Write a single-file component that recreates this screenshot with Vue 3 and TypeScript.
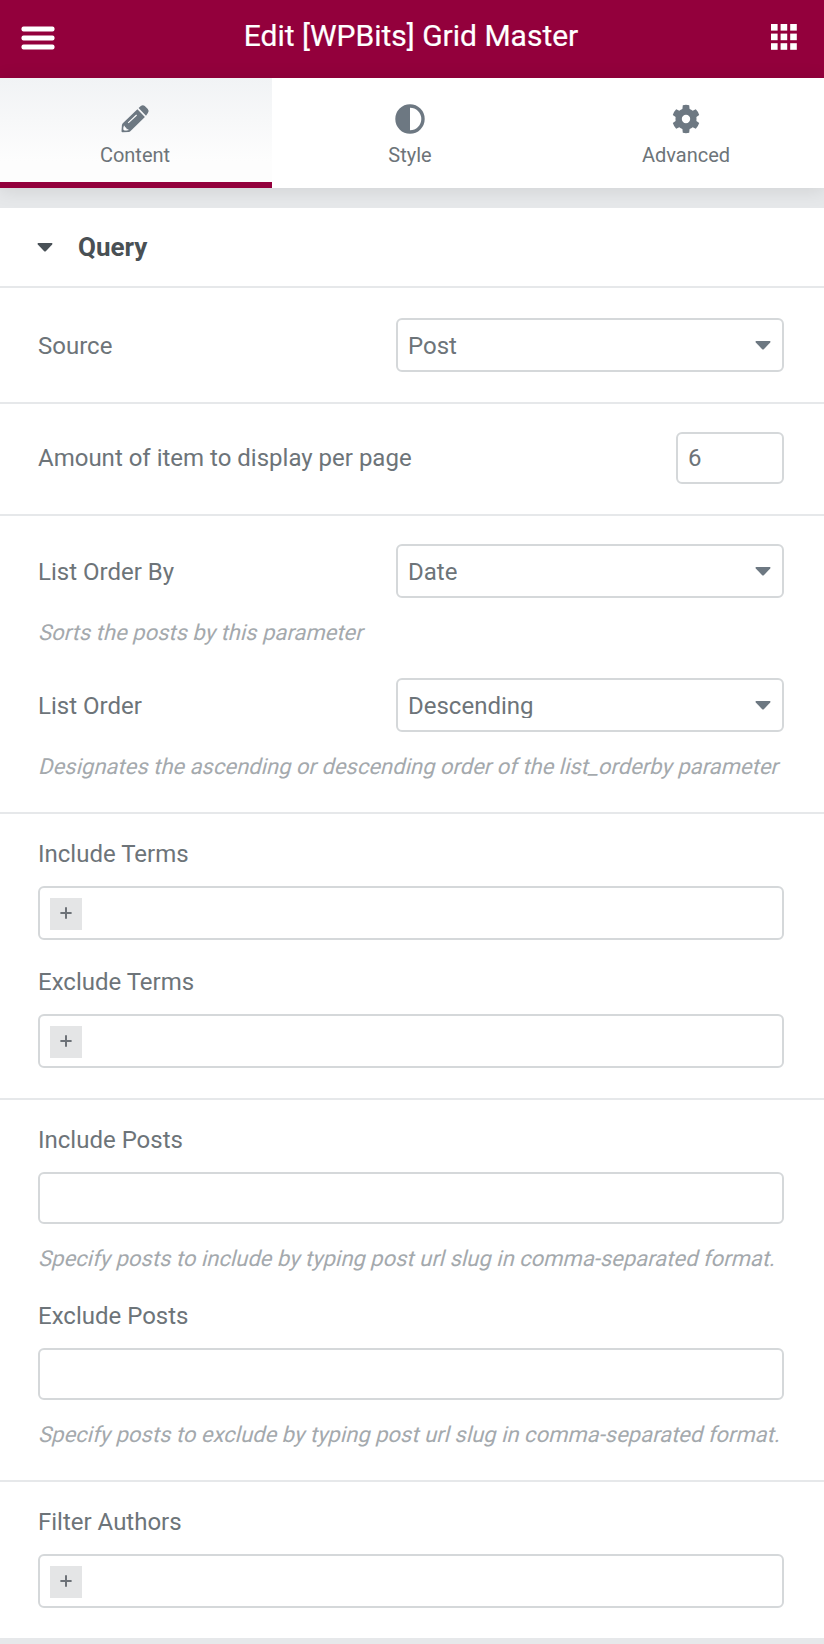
<script setup lang="ts">
interface Tab {
  id: string
  label: string
}

interface Control {
  kind: 'select' | 'number' | 'tags' | 'text'
  label: string
  value?: string
  help?: string
}

const tabs: Tab[] = [
  { id: 'content', label: 'Content' },
  { id: 'style', label: 'Style' },
  { id: 'advanced', label: 'Advanced' },
]
const activeTab = 'content'

const groups: Control[][] = [
  [{ kind: 'select', label: 'Source', value: 'Post' }],
  [{ kind: 'number', label: 'Amount of item to display per page', value: '6' }],
  [
    { kind: 'select', label: 'List Order By', value: 'Date', help: 'Sorts the posts by this parameter' },
    {
      kind: 'select',
      label: 'List Order',
      value: 'Descending',
      help: 'Designates the ascending or descending order of the list_orderby parameter',
    },
  ],
  [
    { kind: 'tags', label: 'Include Terms' },
    { kind: 'tags', label: 'Exclude Terms' },
  ],
  [
    {
      kind: 'text',
      label: 'Include Posts',
      help: 'Specify posts to include by typing post url slug in comma-separated format.',
    },
    {
      kind: 'text',
      label: 'Exclude Posts',
      help: 'Specify posts to exclude by typing post url slug in comma-separated format.',
    },
  ],
  [{ kind: 'tags', label: 'Filter Authors' }],
]
</script>

<template>
  <div class="panel">
    <header class="header">
      <svg class="menu" width="34" height="24" viewBox="0 0 34 24" fill="#fff">
        <rect x="0.5" y="0.4" width="33" height="5" rx="2" />
        <rect x="0.5" y="9.4" width="33" height="5" rx="2" />
        <rect x="0.5" y="18.4" width="33" height="5" rx="2" />
      </svg>
      <h1 class="title">Edit [WPBits] Grid Master</h1>
      <svg class="apps" width="26" height="26" viewBox="0 0 26 26" fill="#fff">
        <template v-for="r in 3" :key="r">
          <rect v-for="c in 3" :key="c" :x="(c - 1) * 9.6" :y="(r - 1) * 9.6" width="6.6" height="6.6" />
        </template>
      </svg>
    </header>

    <nav class="tabs">
      <div v-for="tab in tabs" :key="tab.id" class="tab" :class="{ active: tab.id === activeTab }">
        <svg v-if="tab.id === 'content'" class="icon" width="30" height="30" viewBox="0 0 30 30">
          <path d="M17.400 5.200 2.800 19.300Q2 20.100 1.900 21.200L1.500 27.200Q1.500 28.300 2.600 28.300L8.600 28Q9.800 27.900 10.600 27.100L24.900 12.900Z" fill="#6d7882" />
          <path d="M18.600 4.100 20.800 2Q22.800 .4 24.800 2L27.800 5.100Q29.500 7 27.900 9L26 11.700Z" fill="#6d7882" />
          <path d="M8.200 18.800 16.600 11" stroke="#fff" stroke-width="1.100" />
          <path d="M4.200 21.800Q3.200 23.700 3.800 26Q6 26.800 8.400 25.800Q6 25.700 5.900 23.800Q4.500 23.700 4.200 21.800Z" fill="#fff" stroke="#fff" stroke-width=".5" />
        </svg>
        <svg v-else-if="tab.id === 'style'" class="icon" width="30" height="30" viewBox="0 0 30 30">
          <circle cx="15" cy="15" r="13" fill="none" stroke="#6d7882" stroke-width="3.4" />
          <path d="M15 2A13 13 0 0 0 15 28Z" fill="#6d7882" />
        </svg>
        <svg v-else class="icon" width="30" height="30" viewBox="0 0 30 30" fill="#6d7882">
          <path
            fill-rule="evenodd"
            d="M11.8 1.3Q15 .4 18.2 1.3L18.6 5Q20.3 5.700 21.700 6.800L24.800 5.300Q27.300 7.800 28.200 10.900L25.400 13Q25.600 15 25.400 17L28.200 19.100Q27.300 22.200 24.800 24.700L21.700 23.200Q20.300 24.300 18.600 25L18.200 28.700Q15 29.600 11.800 28.700L11.400 25Q9.700 24.300 8.300 23.200L5.200 24.700Q2.700 22.200 1.800 19.100L4.600 17Q4.400 15 4.600 13L1.800 10.900Q2.700 7.800 5.200 5.300L8.300 6.800Q9.700 5.700 11.400 5ZM15 10.800A4.200 4.200 0 1 0 15 19.200 4.200 4.200 0 0 0 15 10.800Z"
          />
        </svg>
        <span class="tab-label">{{ tab.label }}</span>
      </div>
    </nav>

    <main class="body">
      <div class="section-head">
        <svg class="caret" width="16" height="9" viewBox="0 0 16 9" fill="#495157">
          <path d="M1.200 0H14.800Q16 .5 15.200 1.400L8.800 8.200Q8 9 7.200 8.200L.8 1.400Q0 .5 1.200 0Z" />
        </svg>
        <h2 class="section-title">Query</h2>
      </div>

      <section v-for="(group, gi) in groups" :key="gi" class="group" :class="[group[0].kind, { described: group[0].help }]">
        <div v-for="control in group" :key="control.label" class="control" :class="`is-${control.kind}`">
          <div class="field">
            <span class="label">{{ control.label }}</span>
            <div class="input">
              <span v-if="control.value" class="value">{{ control.value }}</span>
              <svg v-if="control.kind === 'select'" class="caret" width="16" height="9" viewBox="0 0 16 9" fill="#6d7882">
                <path d="M1.200 0H14.800Q16 .5 15.200 1.400L8.800 8.200Q8 9 7.200 8.200L.8 1.400Q0 .5 1.200 0Z" />
              </svg>
              <span v-if="control.kind === 'tags'" class="add">
                <svg width="12" height="12" viewBox="0 0 12 12" stroke="#6d7278" stroke-width="2">
                  <path d="M6 .2V11.800M.4 6H11.600" />
                </svg>
              </span>
            </div>
          </div>
          <p v-if="control.help" class="help">{{ control.help }}</p>
        </div>
      </section>
    </main>
  </div>
</template>

<style>
body {
  margin: 0;
  background: #e6e8ea;
}
</style>

<style scoped>
.panel {
  width: 824px;
  height: 1644px;
  overflow: hidden;
  background: #e6e8ea;
  font-family: Roboto, 'Liberation Sans', sans-serif;
  color: #6d7479;
}

.panel * {
  box-sizing: border-box;
}

.header {
  display: flex;
  justify-content: space-between;
  height: 78px;
  padding: 0 27px 0 21px;
  background: #93003c;
}

.menu {
  margin-top: 26px;
}

.apps {
  margin-top: 24px;
}

.title {
  margin: 0;
  padding-right: 4px;
  font-size: 30px;
  line-height: 72px;
  font-weight: 400;
  color: #fff;
  white-space: nowrap;
  -webkit-text-stroke: 0.2px #fff;
}

.tabs {
  position: relative;
  display: grid;
  grid-template-columns: 272px 276px 276px;
  height: 110px;
  background: #fff;
  box-shadow: 0 2px 18px rgba(0, 0, 0, 0.1);
}

.tab {
  display: flex;
  flex-direction: column;
  align-items: center;
  padding-top: 26px;
}

.tab.active {
  padding-right: 2px;
  background: linear-gradient(#f1f3f5, #fdfdfd 80%);
  border-bottom: 6px solid #93003c;
}

.icon {
  display: block;
}

.tab-label {
  margin-top: 9px;
  font-size: 20px;
  line-height: 24px;
}

.body {
  margin-top: 20px;
  height: 1430px;
  background: #fff;
}

.section-head {
  display: flex;
  align-items: center;
  gap: 25px;
  height: 78px;
  padding-left: 37px;
}

.section-title {
  margin: 0;
  font-size: 26px;
  line-height: 78px;
  font-weight: 700;
  color: #495054;
}

.group {
  padding: 28px 40px 30px 38px;
  border-top: 2px solid #e6e8ea;
}

.group.select:not(.described) {
  padding-top: 30px;
}

.group.tags,
.group.text {
  padding-top: 26px;
}

.group.described {
  padding-bottom: 31px;
}

.is-select + .is-select {
  margin-top: 31px;
}

.is-tags + .is-tags {
  margin-top: 28px;
}

.is-text + .is-text {
  margin-top: 29px;
}

.is-select .field,
.is-number .field {
  display: flex;
  align-items: center;
  justify-content: space-between;
}

.label {
  display: block;
  font-size: 24px;
  line-height: 28px;
}

.is-select .label {
  padding-top: 2px;
}

.input {
  display: flex;
  align-items: center;
  height: 54px;
  padding: 0 10px;
  border: 2px solid #d5d8da;
  border-radius: 6px;
  background: #fff;
}

.is-select .input {
  width: 388px;
  justify-content: space-between;
  padding-right: 11.5px;
}

.is-number .input {
  width: 108px;
  height: 52px;
}

.is-text .input {
  height: 52px;
}

.value {
  height: 26px;
  font-size: 24px;
  line-height: 26px;
  overflow: hidden;
}

/* The closed select trims the lowest part of descenders. */
.is-select .value {
  line-height: 28px;
}

.is-tags .input,
.is-text .input {
  margin-top: 18px;
}

.is-tags .input {
  padding-top: 2px;
}

.add {
  display: flex;
  align-items: center;
  justify-content: center;
  width: 32px;
  height: 32px;
  padding-bottom: 3px;
  background: #e4e5e6;
}

/* Slanted upright letterforms rather than the family's italic cut. */
.help {
  margin: 21px 0 0;
  font-size: 22px;
  line-height: 28px;
  color: #a4a9ad;
  white-space: nowrap;
  transform: skewX(-14deg);
  transform-origin: 0 21px;
}
</style>
